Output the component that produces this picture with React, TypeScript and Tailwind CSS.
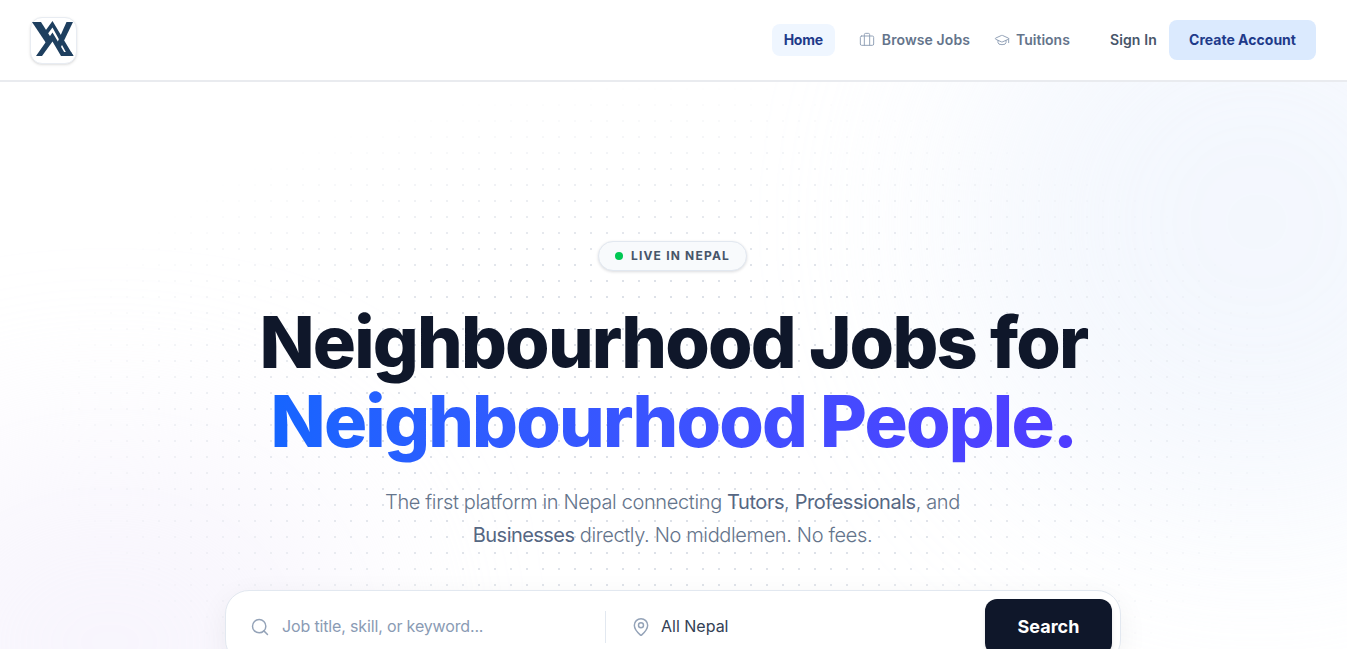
import { Briefcase, GraduationCap, MapPin, Search } from "lucide-react";

function Logo() {
  return (
    <div className="h-[47px] w-[47px] rounded-xl border border-[#e8ecf2] bg-white shadow-sm">
      <svg width="45" height="45" viewBox="1 1 45 45" fill="#1e3f5f">
        <path d="M2 5 H11 L20.5 20 L16 26 Z" />
        <path d="M43 5 H36.5 L26.5 27.5 L29.5 33 Z" />
        <path d="M22.5 4 L14.5 15 L16.5 18.5 L22.5 10.5 L38 39 H43.5 Z" />
        <path d="M6 39 H12 L22.5 24.5 L31 39 H36.5 L22.5 15.5 Z" />
        <path d="M31 39 L33.5 35 H41 L43.5 39 Z" />
      </svg>
    </div>
  );
}

export default function App() {
  return (
    <div className="relative h-screen overflow-hidden bg-white font-['Inter',sans-serif]">
      <header className="relative z-10 flex h-[82px] items-center justify-between border-b-2 border-[#e9ebef] bg-white pl-[30px] pr-[31px]">
        <Logo />
        <nav className="flex items-center text-sm font-semibold">
          <a className="rounded-lg bg-[#eff6ff] px-3 py-1.5 font-bold tracking-[-0.25px] text-[#1e3a8a]">Home</a>
          <a className="ml-3 flex items-center gap-[7px] px-3 py-1.5 tracking-[0.1px] text-[#64748b]">
            <Briefcase size={16} strokeWidth={1.5} className="text-[#94a3b8]" />
            Browse Jobs
          </a>
          <a className="flex items-center gap-1.5 px-3 py-1.5 text-[#64748b]">
            <GraduationCap size={16} strokeWidth={1.5} className="text-[#94a3b8]" />
            Tuitions
          </a>
          <a className="ml-4 px-3 py-1.5 tracking-[0.15px] text-[#475569]">Sign In</a>
          <a className="rounded-lg bg-[#dbeafe] px-5 py-2.5 font-bold tracking-[0.02px] text-[#1e3a8a]">Create Account</a>
        </nav>
      </header>

      <main className="relative h-[567px] overflow-hidden">
        <div className="absolute -right-[210px] -top-[160px] h-[600px] w-[600px] rounded-full bg-[#e6eefc] opacity-45 blur-[100px]" />
        <div className="absolute -left-[140px] top-[360px] h-[400px] w-[500px] rounded-full bg-[#f1ecfb] opacity-50 blur-[90px]" />
        <div className="absolute inset-0 bg-[radial-gradient(circle,#dde1e8_1px,transparent_1px)] bg-[position:7px_-1px] bg-[size:16px_16px] [mask-image:radial-gradient(ellipse_640px_340px_at_673px_340px,black_45%,transparent_100%)]" />

        <section className="relative flex flex-col items-center pt-[159px]">
          <div className="mr-[2px] flex h-[30px] items-center gap-2 rounded-full border border-[#e2e8f0] bg-[#f8fafc] px-4 text-xs font-bold tracking-[0.1em] text-[#475569] shadow-[0_1px_3px_rgba(15,23,42,0.15)]">
            <span className="h-2 w-2 rounded-full bg-[#00c853]" />
            LIVE IN NEPAL
          </div>
          <h1 className="mt-[31px] text-center text-[72px] font-extrabold leading-[79px] tracking-[-0.025em] text-[#0f172a]">
            Neighbourhood Jobs for
            <br />
            <span className="bg-gradient-to-r from-[#1565ff] to-[#4f3cff] bg-clip-text text-transparent">
              Neighbourhood People.
            </span>
          </h1>
          <p className="mr-[2px] mt-[26px] w-[640px] text-center text-xl font-light leading-[33px] tracking-[-0.36px] text-[#64748b]">
            The first platform in Nepal connecting <span className="font-normal tracking-[-0.45px] text-[#566783]">Tutors</span>, <span className="font-normal tracking-[-0.45px] text-[#566783]">Professionals</span>, and
            <br />
            <span className="font-normal tracking-[-0.55px] text-[#566783]">Businesses</span> directly. No middlemen. No fees.
          </p>
          <div className="mr-[1px] mt-[38px] flex h-[74px] w-[896px] items-center rounded-3xl border border-[#e2e8f0] bg-white py-2 pl-6 pr-2 shadow-[0_8px_30px_rgba(15,23,42,0.06)]">
            <Search size={20} strokeWidth={1.75} className="text-[#94a3b8]" />
            <span className="mb-[2px] ml-3 w-[323px] text-base tracking-[-0.15px] text-[#8a9bb4]">Job title, skill, or keyword...</span>
            <div className="h-8 w-px bg-[#e2e8f0]" />
            <MapPin size={20} strokeWidth={1.75} className="ml-[25px] text-[#94a3b8]" />
            <span className="mb-[2px] ml-[10px] flex-1 text-base text-[#334155]">All Nepal</span>
            <button className="h-[56px] w-[127px] rounded-xl bg-[#0f172a] text-lg font-bold text-white shadow-md">Search</button>
          </div>
        </section>
      </main>
    </div>
  );
}
